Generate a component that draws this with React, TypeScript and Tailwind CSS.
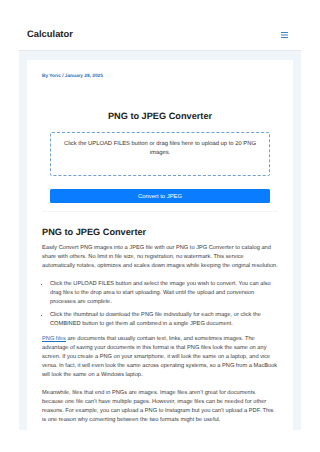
import React from 'react';

const font = { fontFamily: '"Liberation Sans", Arial, sans-serif' };

function Menu() {
  return (
    <svg width="7" height="6" viewBox="0 0 7 6" className="text-[#3f86c4]">
      <rect x="0" y="0" width="7" height="1" fill="currentColor" />
      <rect x="0" y="2.5" width="7" height="1" fill="currentColor" />
      <rect x="0" y="5" width="7" height="1" fill="currentColor" />
    </svg>
  );
}

export default function App() {
  return (
    <div
      className="w-[320px] h-[452px] bg-white overflow-hidden pt-[19px] px-[19px] [text-rendering:geometricPrecision]"
      style={font}
    >
      {/* Header */}
      <header className="h-[32px] bg-white flex items-center justify-between pl-[8px] pr-[13px] border-b border-[#e4e8ec] shadow-[0_1px_1px_rgba(0,0,0,0.03)]">
        <span className="text-[9.4px] font-bold text-[#222]">Calculator</span>
        <Menu />
      </header>

      {/* Content area */}
      <div className="bg-[#f0f5fa] px-[8px] pt-[9px] h-[379px]">
        <article className="bg-white h-full px-[15px] pt-[14px] text-[#3a3a3a]">
          <div className="text-[4.75px] font-bold text-[#1e73be] leading-[6px]">By Yoric / January 28, 2025</div>

          {/* Converter tool */}
          <div className="px-[8px] pt-[30px]">
            <h2 className="text-center text-[9.2px] font-bold text-[#222] leading-[12px]">PNG to JPEG Converter</h2>
            <div className="mt-[10px] h-[44px] border border-dashed border-[#6f9fd2] rounded-[2px] flex flex-col items-center pt-[7px] px-[12px]">
              <p className="text-center text-[5.85px] leading-[9px] text-[#333]">
                Click the UPLOAD FILES button or drag files here to upload up to 20 PNG images.
              </p>
            </div>
            <button className="mt-[13px] w-full h-[14px] bg-[#0a7cff] rounded-[1.5px] text-white text-[5.9px] flex items-center justify-center">
              Convert to JPEG
            </button>
          </div>

          <hr className="mt-[8px] border-0 border-t border-[#f2f4f6]" />

          {/* Article body */}
          <h2 className="mt-[14px] text-[9.2px] font-bold text-[#222] leading-[12px]">PNG to JPEG Converter</h2>
          <div className="text-[5.68px] leading-[9px] mt-[6px]">
            <p>
              Easily Convert PNG images into a JPEG file with our PNG to JPG Converter to catalog and share with others. No limit in file size, no registration, no watermark. This service automatically rotates, optimizes and scales down images while keeping the original resolution.
            </p>
            <ul className="mt-[9px] mb-[6px] pl-[8px] list-disc flex flex-col gap-[4px]">
              <li>
                Click the UPLOAD FILES button and select the image you wish to convert. You can also drag files to the drop area to start uploading. Wait until the upload and conversion processes are complete.
              </li>
              <li>
                Click the thumbnail to download the PNG file individually for each image, or click the COMBINED button to get them all combined in a single JPEG document.
              </li>
            </ul>
            <p>
              <a className="text-[#1e73be] underline">PNG files</a>{' '}
              are documents that usually contain text, links, and sometimes images. The advantage of saving your documents in this format is that PNG files look the same on any screen. If you create a PNG on your smartphone, it will look the same on a laptop, and vice versa. In fact, it will even look the same across operating systems, so a PNG from a MacBook will look the same on a Windows laptop.
            </p>
            <p className="mt-[9px]">
              Meanwhile, files that end in PNGs are images. Image files aren’t great for documents because one file can’t have multiple pages. However, image files can be needed for other reasons. For example, you can upload a PNG to Instagram but you can’t upload a PDF. This is one reason why converting between the two formats might be useful.
            </p>
          </div>
        </article>
      </div>
    </div>
  );
}
